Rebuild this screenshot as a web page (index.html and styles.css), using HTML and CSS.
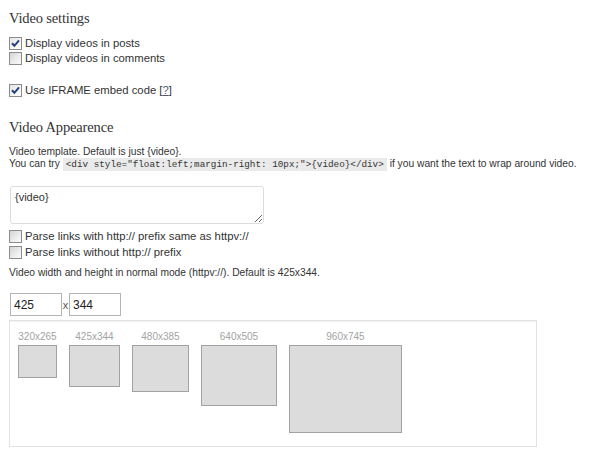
FILE: index.html
```html
<!DOCTYPE html>
<html>
<head>
<meta charset="utf-8">
<link rel="stylesheet" href="styles.css">
</head>
<body>
<h3 class="title first">Video settings</h3>
<label class="check row-a"><span class="cb on"><svg viewBox="0 0 11 11" width="11" height="11"><path d="M2 5.2 L4.4 7.8 L9 2.4" fill="none" stroke="#23407f" stroke-width="2"/></svg></span>Display videos in posts</label>
<label class="check"><span class="cb"></span>Display videos in comments</label>
<label class="check row-c"><span class="cb on"><svg viewBox="0 0 11 11" width="11" height="11"><path d="M2 5.2 L4.4 7.8 L9 2.4" fill="none" stroke="#23407f" stroke-width="2"/></svg></span>Use IFRAME embed code <span class="help">[<a class="help-link">?</a>]</span></label>

<h3 class="title second">Video Appearence</h3>
<p class="note tpl">Video template. Default is just {video}.<br>You can try <code class="code">&lt;div style="float:left;margin-right: 10px;"&gt;{video}&lt;/div&gt;</code> if you want the text to wrap around video.</p>

<textarea class="template">{video}</textarea>

<label class="check parse first-parse"><span class="cb"></span>Parse links with http:// prefix same as httpv://</label>
<label class="check parse"><span class="cb"></span>Parse links without http:// prefix</label>

<p class="note size-note">Video width and height in normal mode (httpv://). Default is 425x344.</p>

<div class="dims">
  <input class="num" type="text" value="425">
  <span class="times">x</span>
  <input class="num" type="text" value="344">
</div>

<div class="preview">
  <div class="item"><div class="lbl">320x265</div><div class="frame" style="width:39px;height:33px"></div></div>
  <div class="item"><div class="lbl">425x344</div><div class="frame" style="width:51px;height:42px"></div></div>
  <div class="item"><div class="lbl">480x385</div><div class="frame" style="width:57px;height:47px"></div></div>
  <div class="item"><div class="lbl">640x505</div><div class="frame" style="width:76px;height:61px"></div></div>
  <div class="item"><div class="lbl">960x745</div><div class="frame" style="width:113px;height:88px"></div></div>
</div>
</body>
</html>
```

FILE: styles.css
```css
html, body {
  margin: 0;
  background: #fff;
}
body {
  padding: 0 0 0 9px;
  font-family: "Liberation Sans", Arial, sans-serif;
  color: #333;
}
.title {
  margin: 0;
  font-family: "Liberation Serif", "Times New Roman", serif;
  font-weight: normal;
  font-size: 14.5px;
  letter-spacing: -0.15px;
  line-height: 18px;
  color: #333;
}
.title.first { padding-top: 9px; }
.title.second { margin-top: 20px; }

.check {
  display: flex;
  align-items: center;
  height: 15px;
  font-size: 11.3px;
  line-height: 15px;
  color: #333;
}
.check.row-a { margin-top: 9px; }
.check.row-c { margin-top: 17px; }
.check.parse { height: 16px; line-height: 16px; }
.check.first-parse { margin-top: 4px; }

.cb {
  box-sizing: border-box;
  width: 13px;
  height: 13px;
  margin-right: 3px;
  border: 1px solid #8a8c8e;
  background: linear-gradient(135deg, #d4d4d4 0%, #ececec 55%, #fafafa 100%);
  display: flex;
  align-items: center;
  justify-content: center;
  flex: none;
}
.cb.on {
  background: linear-gradient(135deg, #e4e4e4 0%, #f6f6f6 60%, #fff 100%);
}
.help { margin-left: 3px; }
.help-link {
  color: #4a5a7a;
  text-decoration: underline;
}

.note {
  margin: 0;
  font-size: 10.25px;
  line-height: 12px;
  color: #333;
}
.tpl { margin-top: 10px; }
.code {
  font-family: "Liberation Mono", "Courier New", monospace;
  font-size: 9.3px;
  background: #eaeaea;
  padding: 1px 3px;
  color: #333;
}

.template {
  display: block;
  box-sizing: border-box;
  margin: 15px 0 0 1px;
  width: 254px;
  height: 38px;
  padding: 3px 4px;
  border: 1px solid #dcdcdc;
  border-radius: 3px;
  font-family: "Liberation Sans", Arial, sans-serif;
  font-size: 11px;
  line-height: 14px;
  color: #333;
  background: #fff;
  outline: none;
}

.size-note { margin-top: 7px; }

.dims {
  display: flex;
  align-items: center;
  margin-top: 14px;
  margin-left: 1px;
  height: 23px;
}
.num {
  box-sizing: border-box;
  width: 52px;
  height: 23px;
  margin: 0;
  padding: 0 3px;
  border: 1px solid #b4b4b4;
  font-family: "Liberation Sans", Arial, sans-serif;
  font-size: 12px;
  color: #222;
  background: #fff;
  outline: none;
}
.times {
  font-size: 11px;
  color: #555;
  width: 7px;
  text-align: center;
}

.preview {
  box-sizing: border-box;
  margin-top: 4px;
  width: 528px;
  height: 127px;
  border: 1px solid #e2e2e2;
  box-shadow: inset 0 1px 0 #f3f3f3;
  padding: 10px 0 0 8px;
  display: flex;
  align-items: flex-start;
  gap: 12px;
}
.item {
  display: flex;
  flex-direction: column;
  align-items: center;
}
.lbl {
  font-size: 10px;
  line-height: 12px;
  color: #a3a3a3;
  margin-bottom: 2px;
}
.frame {
  box-sizing: border-box;
  background: #dcdcdc;
  border: 1px solid #a2a2a2;
}
```
